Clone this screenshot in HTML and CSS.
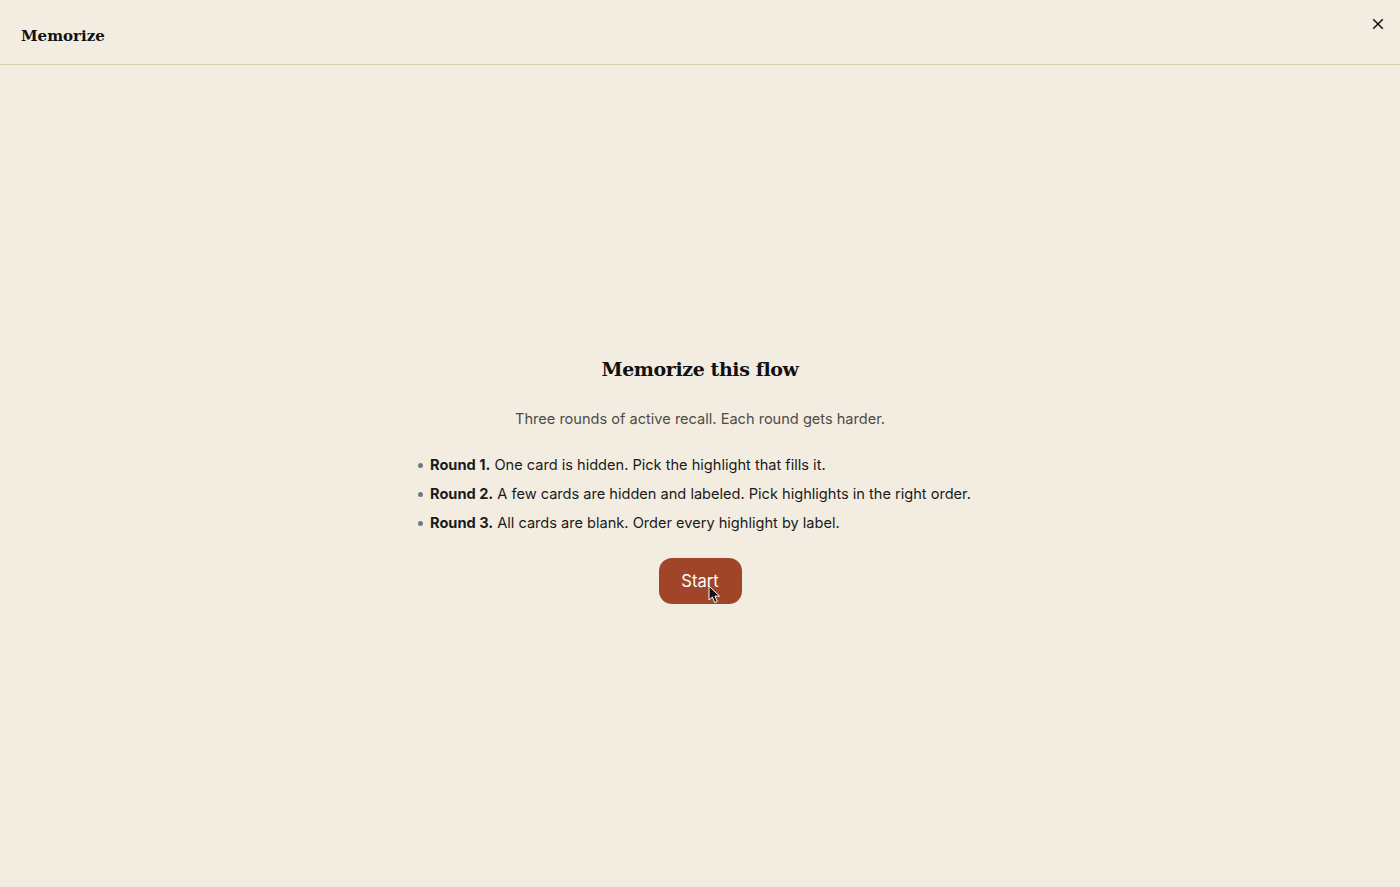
FILE: index.html
```html
<!DOCTYPE html>
<html lang="en">
<head>
<meta charset="utf-8">
<title>Memorize</title>
<link rel="stylesheet" href="styles.css">
</head>
<body>
<div class="page">
  <header class="topbar">
    <h1 class="brand">Memorize</h1>
    <button class="close" aria-label="Close">
      <svg width="16" height="16" viewBox="0 0 16 16"><path d="M3.2 3.2 12.8 12.8M12.8 3.2 3.2 12.8" stroke="#111" stroke-width="1.5" fill="none"/></svg>
    </button>
  </header>
  <main class="intro">
    <h2 class="title">Memorize this flow</h2>
    <p class="lead">Three rounds of active recall. Each round gets harder.</p>
    <ul class="rounds">
      <li><b>Round 1.</b> One card is hidden. Pick the highlight that fills it.</li>
      <li><b>Round 2.</b> A few cards are hidden and labeled. Pick highlights in the right order.</li>
      <li><b>Round 3.</b> All cards are blank. Order every highlight by label.</li>
    </ul>
    <button class="start">Start
      <svg class="cursor" width="13" height="19" viewBox="0 0 13 19"><path d="M1 1v14l3.4-3 2.3 5.6 2.6-1.1-2.4-5.4h4.6z" fill="#111" stroke="#fff" stroke-width="1"/></svg>
    </button>
  </main>
</div>
</body>
</html>
```
FILE: styles.css
```css
* { box-sizing: border-box; }
html, body { margin: 0; height: 100%; }
body { background: #f3ede1; color: #111; font-family: Inter, "Liberation Sans", sans-serif; }
.page { height: 887px; display: flex; flex-direction: column; overflow: hidden; }
.topbar { height: 65px; flex: none; border-bottom: 1px solid #d9cfb3; display: flex; justify-content: space-between; padding: 0 14px 0 21px; }
.brand { margin: 0; padding-top: 26px; font: 700 15px/20px "DejaVu Serif", "Liberation Serif", serif; }
.close { background: none; border: 0; padding: 0; width: 16px; height: 16px; margin-top: 16px; display: flex; }
.intro { flex: 1; display: flex; flex-direction: column; align-items: center; padding-top: 290px; }
.title { margin: 0; font: 700 19px/28px "DejaVu Serif", "Liberation Serif", serif; letter-spacing: -0.4px; }
.lead { margin: 26px 0 0; font-size: 14.58px; line-height: 20px; color: #4e4b46; }
.rounds { list-style: none; margin: 26px 0 0; padding: 0 0 0 3px; width: 570px; font-size: 14.58px; line-height: 20px; color: #1a1a1a; }
.rounds li { margin-bottom: 9px; }
.rounds li::before { content: ""; display: inline-block; width: 5px; height: 5px; margin-right: 7px; border-radius: 50%; background: #777; vertical-align: 2px; }
.rounds b { font-weight: 700; }
.start { position: relative; margin-top: 16px; width: 83px; height: 46px; border: 0; border-radius: 13px; background: #a04527; color: #fff; font: 400 16.6px Inter, sans-serif; }
.cursor { position: absolute; left: 49px; top: 27px; }
```
